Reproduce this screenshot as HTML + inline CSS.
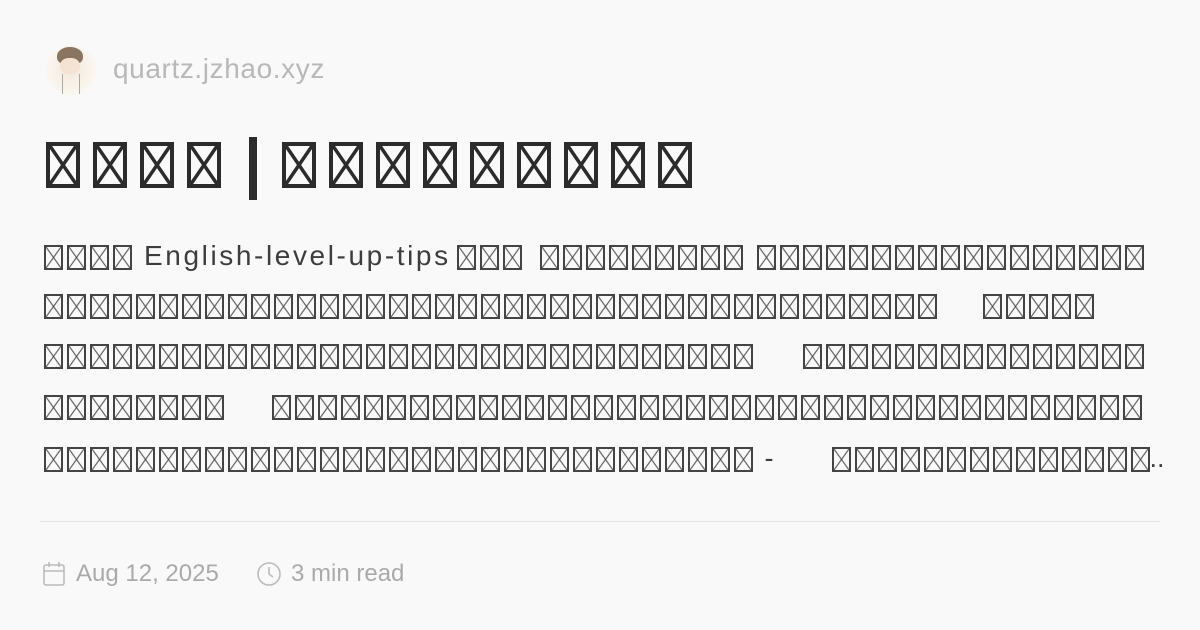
<!DOCTYPE html><html><head><meta charset="utf-8"><style>
body{margin:0;width:1200px;height:630px;background:#faf9f9;font-family:"Liberation Sans","DejaVu Sans",sans-serif;position:relative;overflow:hidden;color:#3d3d3d}
.a{position:absolute;white-space:nowrap}
.t{display:inline-block;box-sizing:border-box;border:4px solid #2b2b2b;width:34px;height:46px;margin-right:13px;vertical-align:top;
background:linear-gradient(to top right,transparent calc(50% - 2px),#2b2b2b calc(50% - 1.5px),#2b2b2b calc(50% + 1.5px),transparent calc(50% + 2px)),linear-gradient(to top left,transparent calc(50% - 2px),#2b2b2b calc(50% - 1.5px),#2b2b2b calc(50% + 1.5px),transparent calc(50% + 2px))}
.s{display:inline-block;box-sizing:border-box;border:2px solid #444;width:19px;height:25px;margin-right:4px;vertical-align:middle;
background:linear-gradient(to top right,transparent calc(50% - 1px),#444 50%,transparent calc(50% + 1px)),linear-gradient(to top left,transparent calc(50% - 1px),#444 50%,transparent calc(50% + 1px))}
.row{position:absolute;left:44px;height:30px;white-space:nowrap;font-size:27px;line-height:30px}
.meta{color:#aaa;font-size:24px;position:absolute;top:560px}
.en{font-size:28px;letter-spacing:2.6px}
</style></head><body>
<div class="a" style="left:46px;top:45px;width:50px;height:50px;border-radius:50%;background:radial-gradient(circle,#f3e9dc,#faf6f0 70%)"></div>
<div class="a" style="left:57px;top:47px;width:26px;height:18px;border-radius:50% 50% 40% 40%;background:#8a7563"></div>
<div class="a" style="left:60px;top:58px;width:20px;height:16px;border-radius:45%;background:#f4e3d3"></div>
<div class="a" style="left:62px;top:74px;width:16px;height:20px;border-left:1px solid #aaa;border-right:1px solid #aaa"></div>
<div class="a" style="left:113px;top:53px;font-size:28px;color:#b8b8b8;letter-spacing:0.6px">quartz.jzhao.xyz</div>
<div class="a" style="left:46px;top:142px" id="title"></div>
<div class="a" style="left:249px;top:137px;width:8px;height:63px;background:#2b2b2b"></div>
<div class="a" style="left:282px;top:142px" id="title2"></div>
<div class="row" style="top:241px" id="r1"></div>
<div class="row" style="top:290px" id="r2"></div>
<div class="row" style="top:340px" id="r3"></div>
<div class="row" style="top:391px" id="r4"></div>
<div class="row" style="top:443px" id="r5"></div>
<div class="a" style="left:40px;top:521px;width:1120px;height:1px;background:#e3e3e3"></div>
<svg class="a" style="left:42px;top:561px" width="24" height="26" viewBox="0 0 24 26" fill="none" stroke="#bbb" stroke-width="1.6"><rect x="2" y="4" width="20" height="20" rx="2"/><line x1="2" y1="10" x2="22" y2="10"/><line x1="7" y1="1" x2="7" y2="6"/><line x1="17" y1="1" x2="17" y2="6"/></svg>
<div class="meta" style="left:76px">Aug 12, 2025</div>
<svg class="a" style="left:256px;top:561px" width="26" height="26" viewBox="0 0 26 26" fill="none" stroke="#bbb" stroke-width="1.6"><circle cx="13" cy="13" r="11"/><path d="M13 6v7l4 3"/></svg>
<div class="meta" style="left:291px">3 min read</div>
<script>
function b(n,c){return ('<span class="'+c+'"></span>').repeat(n)}
document.getElementById('title').innerHTML=b(4,'t');
document.getElementById('title2').innerHTML=b(9,'t');
function g(w){return '<span style="display:inline-block;width:'+w+'px"></span>'}
document.getElementById('r1').innerHTML=b(4,'s')+g(8)+'<span class="en">English-level-up-tips</span>'+g(6)+b(3,'s')+g(14)+b(9,'s')+g(10)+b(17,'s');
document.getElementById('r2').innerHTML=b(39,'s')+g(42)+b(5,'s');
document.getElementById('r3').innerHTML=b(31,'s')+g(46)+b(15,'s');
document.getElementById('r4').innerHTML=b(8,'s')+g(44)+b(38,'s');
document.getElementById('r5').innerHTML=b(31,'s')+' -'+g(58)+b(13,'s')+'<span class="s" style="margin-right:0"></span>..';
</script>
</body></html>
